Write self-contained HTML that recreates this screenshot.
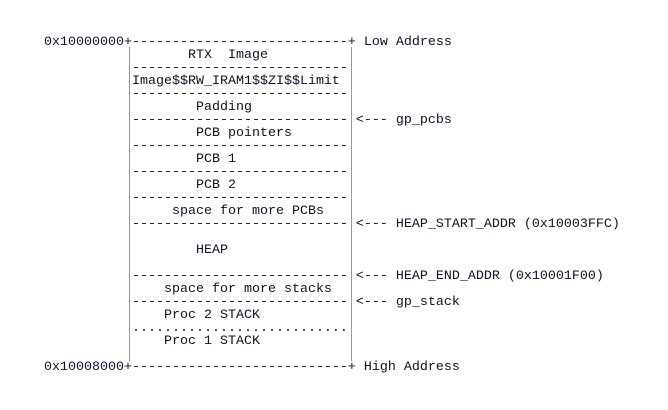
<!DOCTYPE html>
<html><head><style>
html,body{margin:0;padding:0;background:#fff;width:668px;height:410px;overflow:hidden}
pre{position:absolute;left:44px;top:36px;margin:0;font-family:"Liberation Mono",monospace;font-size:13.33px;line-height:13px;color:#101028}
.b{position:absolute;top:47px;height:314px;width:1px;background:#d98a30}
</style></head><body>
<div class="b" style="left:129px"></div>
<div class="b" style="left:351px"></div>
<pre>0x10000000+---------------------------+ Low Address
                  RTX  Image
           ---------------------------
           Image$$RW_IRAM1$$ZI$$Limit
           ---------------------------
                   Padding
           --------------------------- &lt;--- gp_pcbs
                   PCB pointers
           ---------------------------
                   PCB 1
           ---------------------------
                   PCB 2
           ---------------------------
                space for more PCBs
           --------------------------- &lt;--- HEAP_START_ADDR (0x10003FFC)

                   HEAP

           --------------------------- &lt;--- HEAP_END_ADDR (0x10001F00)
               space for more stacks
           --------------------------- &lt;--- gp_stack
               Proc 2 STACK
           ...........................
               Proc 1 STACK

0x10008000+---------------------------+ High Address</pre>
</body></html>
